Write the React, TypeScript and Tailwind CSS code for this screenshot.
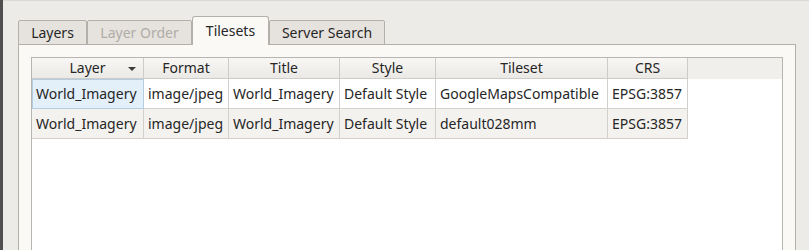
import React from "react";

const cols = [
  { name: "Layer", w: 112 },
  { name: "Format", w: 85 },
  { name: "Title", w: 111 },
  { name: "Style", w: 96 },
  { name: "Tileset", w: 172 },
  { name: "CRS", w: 80 },
];

const rows = [
  ["World_Imagery", "image/jpeg", "World_Imagery", "Default Style", "GoogleMapsCompatible", "EPSG:3857"],
  ["World_Imagery", "image/jpeg", "World_Imagery", "Default Style", "default028mm", "EPSG:3857"],
];

const tabs = [
  { label: "Layers", w: 69, disabled: false, active: false },
  { label: "Layer Order", w: 105, disabled: true, active: false },
  { label: "Tilesets", w: 77, disabled: false, active: true },
  { label: "Server Search", w: 116, disabled: false, active: false },
];

export default function App() {
  return (
    <div
      className="w-[809px] h-[250px] bg-[#edebe7] flex overflow-hidden text-[14px] text-[#262626]"
      style={{ fontFamily: '"Noto Sans", "DejaVu Sans", sans-serif' }}
    >
      <div className="w-[3px] h-full bg-[#4f4f4f]" />
      <div className="flex-1 flex flex-col">
        <div className="h-[1px] bg-[#dcd9d4]" />
        <div className="flex-1 flex flex-col pl-[15px] pr-[13px] pt-[15px]">
          {/* tab bar */}
          <div className="flex items-end h-[29px] -mb-px relative z-10">
            {tabs.map((t) =>
              t.active ? (
                <div
                  key={t.label}
                  style={{ width: t.w }}
                  className="h-[29px] flex items-start justify-center pt-[4px] bg-[#fbf9f6] border border-b-0 border-[#b3afa9] rounded-t-[3px] leading-[20px]"
                >
                  {t.label}
                </div>
              ) : (
                <div
                  key={t.label}
                  style={{ width: t.w }}
                  className={
                    "h-[25px] flex items-center justify-center bg-[#e6e3de] border border-[#b3afa9] rounded-t-[2px] leading-[20px] " +
                    (t.disabled ? "text-[#b0aca6]" : "")
                  }
                >
                  {t.label}
                </div>
              )
            )}
          </div>
          {/* pane */}
          <div className="flex-1 border border-b-0 border-[#b3afa9] bg-[#fbf9f6] pt-[12px] pl-[12px] pr-[12px] flex flex-col">
            <div className="flex-1 border border-b-0 border-[#b8b5b0] bg-white flex flex-col">
              {/* header */}
              <div className="flex h-[21px] bg-[#f1efec]">
                {cols.map((c, i) => (
                  <div
                    key={c.name}
                    style={{ width: c.w }}
                    className="h-[21px] relative flex items-center justify-center border-r border-b border-[#cfccc7] bg-gradient-to-b from-[#f8f7f5] to-[#ebe9e5] leading-[20px]"
                  >
                    {c.name}
                    {i === 0 && (
                      <svg
                        className="absolute right-[7px] top-[9px]"
                        width="8"
                        height="4"
                        viewBox="0 0 8 4"
                      >
                        <path d="M0 0 L8 0 L4 4 Z" fill="#3c3c3c" />
                      </svg>
                    )}
                  </div>
                ))}
              </div>
              {rows.map((r, ri) => (
                <div key={ri} className="flex h-[30px]">
                  {r.map((v, ci) => {
                    const selected = ri === 0 && ci === 0;
                    return (
                      <div
                        key={ci}
                        style={{ width: cols[ci].w }}
                        className={
                          "h-[30px] flex items-center whitespace-nowrap overflow-hidden leading-[20px] " +
                          (selected
                            ? "pl-[3px] bg-[#e4f0f9] border border-[#b4cde0] "
                            : "pl-[4px] border-r border-b border-[#d3d0cc] " +
                              (ri === 1 ? "bg-[#f4f2ef]" : "bg-white"))
                        }
                      >
                        {v}
                      </div>
                    );
                  })}
                </div>
              ))}
            </div>
          </div>
        </div>
      </div>
    </div>
  );
}
